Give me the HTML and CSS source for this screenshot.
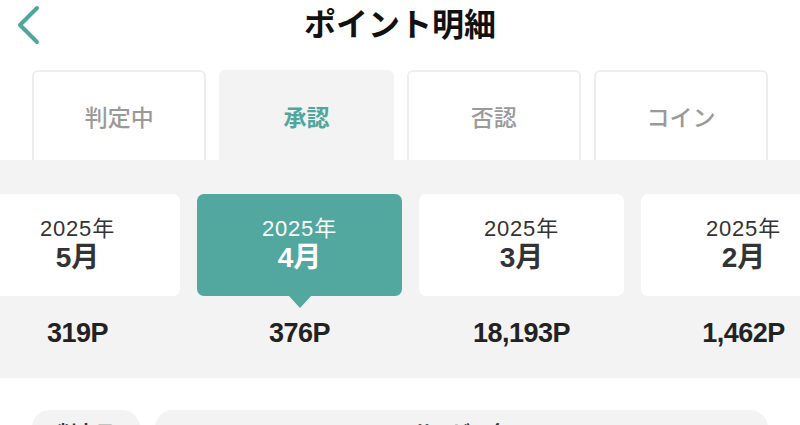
FILE: index.html
```html
<!DOCTYPE html>
<html>
<head>
<meta charset="UTF-8">
  <meta name="viewport" content="width=device-width, initial-scale=1.0">
  <title>ポイント明細</title>
  <link rel="stylesheet" href="styles.css">
</head>
<body>
<div id="header">
  <a class="back" href="#">
    <svg width="30" height="44" viewBox="0 0 30 44">
      <polyline points="21,7 4,24 21,41" fill="none" stroke="#4fa69d" stroke-width="4" stroke-linecap="round" stroke-linejoin="round"/>
    </svg>
  </a>
  <h1>ポイント明細</h1>
</div>

<div id="tabs">
  <div class="tab">判定中</div>
  <div class="tab active">承認</div>
  <div class="tab">否認</div>
  <div class="tab">コイン</div>
</div>

<div id="band">
  <div class="months">
    <div class="month">
      <div class="month-card"><span class="year">2025年</span><span class="mon">5月</span></div>
      <div class="month-pt">319P</div>
    </div>
    <div class="month">
      <div class="month-card selected"><span class="year">2025年</span><span class="mon">4月</span></div>
      <div class="month-pt">376P</div>
    </div>
    <div class="month">
      <div class="month-card"><span class="year">2025年</span><span class="mon">3月</span></div>
      <div class="month-pt">18,193P</div>
    </div>
    <div class="month">
      <div class="month-card"><span class="year">2025年</span><span class="mon">2月</span></div>
      <div class="month-pt">1,462P</div>
    </div>
  </div>
</div>

<div id="list_head">
  <div class="pill date">判定日</div>
  <div class="pill name">サービス名</div>
</div>
</body>
</html>
```

FILE: styles.css
```css
/* ページ全体 */
body {
  font-family: "Liberation Sans", "Noto Sans CJK JP", sans-serif;
  margin: 0;
  padding: 0;
  color: #333;
  background: #fff;
  width: 800px;
  height: 425px;
  overflow: hidden;
}

#header {
  height: 50px;
  display: flex;
  justify-content: center;
  align-items: center;
  position: relative;
}
#header h1 {
  margin: 0;
  font-size: 32px;
  font-weight: bold;
  color: #111;
  line-height: 48px;
}
.back {
  position: absolute;
  left: 16px;
  top: 1px;
}

#tabs {
  display: flex;
  gap: 13px;
  padding: 20px 32px 0;
}
.tab {
  flex: 1;
  height: 88px;
  border: 2px solid #eeeeee;
  border-bottom: none;
  border-radius: 6px 6px 0 0;
  display: flex;
  justify-content: center;
  align-items: center;
  font-size: 23px;
  font-weight: 500;
  color: #9a9a9a;
  font-family: "Noto Sans CJK JP", sans-serif;
}
.tab.active {
  background: #f3f3f3;
  border-color: #f3f3f3;
  color: #4fa69d;
  font-weight: bold;
}

#band {
  background: #f3f3f3;
  padding: 34px 0 30px;
  overflow: hidden;
}
.months {
  display: flex;
  gap: 17px;
  margin-left: -25px;
}
.month {
  width: 205px;
  flex-shrink: 0;
}
.month-card {
  height: 102px;
  background: #fff;
  border-radius: 7px;
  display: flex;
  flex-direction: column;
  justify-content: center;
  align-items: center;
  position: relative;
  color: #333;
}
.month-card.selected {
  background: #52a89f;
  color: #fff;
}
.month-card.selected::after {
  content: "";
  position: absolute;
  left: 50%;
  bottom: -12px;
  margin-left: -11px;
  border-left: 11px solid transparent;
  border-right: 11px solid transparent;
  border-top: 12px solid #52a89f;
}
.year {
  font-size: 22px;
  line-height: 26px;
  letter-spacing: 0.8px;
}
.mon {
  font-size: 28px;
  font-weight: bold;
  line-height: 32px;
}
.month-pt {
  margin-top: 22px;
  line-height: 30px;
  text-align: center;
  font-size: 27px;
  font-weight: bold;
  color: #222;
  letter-spacing: -0.5px;
}

#list_head {
  display: flex;
  gap: 15px;
  padding: 32px 32px 0;
}
.pill {
  height: 40px;
  background: #f3f3f3;
  border-radius: 18px;
  font-size: 19px;
  font-weight: bold;
  color: #333;
  text-align: center;
  padding-top: 8px;
  box-sizing: border-box;
}
.pill.date {
  width: 108px;
}
.pill.name {
  flex: 1;
}
```
